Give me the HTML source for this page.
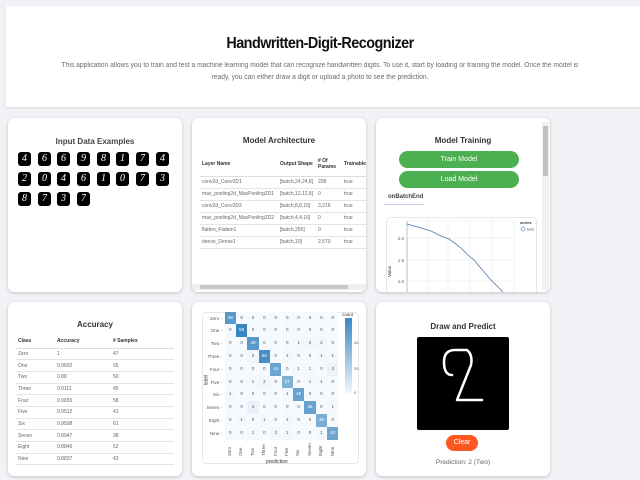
<!DOCTYPE html>
<html><head><meta charset="utf-8"><style>
*{box-sizing:border-box;margin:0;padding:0}
body{width:640px;height:480px;overflow:hidden;background:#f1f1f6;font-family:"Liberation Sans",sans-serif;position:relative}
.a{position:absolute}
.card{position:absolute;background:#fff;border-radius:6px;box-shadow:0 1px 3px rgba(0,0,0,.2);overflow:hidden}
.t{position:absolute;left:0;right:0;text-align:center;font-weight:bold;font-size:8px;color:#333}
.dg{position:absolute;width:13px;height:14px;background:#000;border-radius:3px;color:#fff;font:italic 10px "Liberation Serif",serif;text-align:center;line-height:14px}
table{border-collapse:collapse;font-size:5px;color:#666}
td,th{text-align:left;border-bottom:1px solid #e4e4e4;padding:0 2px}
th{color:#333;font-weight:bold;border-bottom:1px solid #ddd}
.btn{position:absolute;left:23px;width:120px;height:17px;border-radius:9px;background:#4caf50;color:#fff;font-size:7px;text-align:center;line-height:17px}
.c{position:absolute;width:11.4px;height:12.8px;font-size:4.5px;text-align:center;line-height:12.8px;color:#555}
.rl{position:absolute;font-size:4.5px;color:#555;text-align:right;width:22px}
</style></head><body>
<div class="a" style="left:6px;top:6px;width:634px;height:101px;background:#fff;box-shadow:0 1px 2px rgba(0,0,0,.1)"></div>
<div class="a" style="left:0;width:640px;top:35px;text-align:center;font-size:16px;font-weight:bold;color:#111;letter-spacing:-0.6px;transform:scaleX(.9)">Handwritten-Digit-Recognizer</div>
<div class="a" style="left:-40px;width:720px;top:60px;text-align:center;font-size:7px;line-height:12px;color:#6b6b6b;white-space:nowrap;transform:scaleX(.96)">This application allows you to train and test a machine learning model that can recognize handwritten digits. To use it, start by loading or training the model. Once the model is<br>ready, you can either draw a digit or upload a photo to see the prediction.</div>

<div class="card" style="left:8px;top:118px;width:174px;height:174px">
<div class="t" style="top:19px;color:#444">Input Data Examples</div>
<div class="dg" style="left:10px;top:34px">4</div><div class="dg" style="left:30px;top:34px">6</div><div class="dg" style="left:49px;top:34px">6</div><div class="dg" style="left:69px;top:34px">9</div><div class="dg" style="left:89px;top:34px">8</div><div class="dg" style="left:108px;top:34px">1</div><div class="dg" style="left:128px;top:34px">7</div><div class="dg" style="left:148px;top:34px">4</div>
<div class="dg" style="left:10px;top:54px">2</div><div class="dg" style="left:30px;top:54px">0</div><div class="dg" style="left:49px;top:54px">4</div><div class="dg" style="left:69px;top:54px">6</div><div class="dg" style="left:89px;top:54px">1</div><div class="dg" style="left:108px;top:54px">0</div><div class="dg" style="left:128px;top:54px">7</div><div class="dg" style="left:148px;top:54px">3</div>
<div class="dg" style="left:10px;top:74px">8</div><div class="dg" style="left:30px;top:74px">7</div><div class="dg" style="left:49px;top:74px">3</div><div class="dg" style="left:69px;top:74px">7</div>
</div>

<div class="card" style="left:192px;top:118px;width:174px;height:174px">
<div class="t" style="top:18px">Model Architecture</div>
<table class="a" style="left:8px;top:34px;width:170px">
<tr style="height:24px"><th style="width:78px">Layer Name</th><th style="width:38px">Output Shape</th><th style="width:26px"># Of Params</th><th>Trainable</th></tr>
<tr style="height:12px"><td>conv2d_Conv2D1</td><td>[batch,24,24,8]</td><td>208</td><td>true</td></tr>
<tr style="height:12px"><td>max_pooling2d_MaxPooling2D1</td><td>[batch,12,12,8]</td><td>0</td><td>true</td></tr>
<tr style="height:12px"><td>conv2d_Conv2D2</td><td>[batch,8,8,16]</td><td>3,216</td><td>true</td></tr>
<tr style="height:12px"><td>max_pooling2d_MaxPooling2D2</td><td>[batch,4,4,16]</td><td>0</td><td>true</td></tr>
<tr style="height:12px"><td>flatten_Flatten1</td><td>[batch,256]</td><td>0</td><td>true</td></tr>
<tr style="height:12px"><td>dense_Dense1</td><td>[batch,10]</td><td>2,570</td><td>true</td></tr>
</table>
<div class="a" style="left:0;top:166px;width:174px;height:6px;background:#f0f0f0"></div>
<div class="a" style="left:8px;top:167px;width:148px;height:4px;background:#c8c8c8"></div>
</div>

<div class="card" style="left:376px;top:118px;width:174px;height:174px">
<div class="t" style="top:18px">Model Training</div>
<div class="btn" style="top:33px">Train Model</div>
<div class="btn" style="top:53px">Load Model</div>
<div class="a" style="left:12px;top:76px;font-size:6px;font-weight:bold;color:#444">onBatchEnd</div>
<div class="a" style="left:8px;top:86px;width:40px;height:1px;background:#c5cbe8"></div>
<div class="a" style="left:166px;top:4px;width:7px;height:168px;background:#f1f1f1"></div>
<div class="a" style="left:167px;top:8px;width:5px;height:50px;background:#c1c1c1"></div>
<svg class="a" style="left:10px;top:99px" width="152" height="80">
<rect x="0.5" y="0.5" width="150" height="90" rx="4" fill="#fff" stroke="#e6e6e6"/>
<g stroke="#e8e8e8" stroke-width=".6"><line x1="21" y1="4" x2="21" y2="80"/><line x1="42" y1="4" x2="42" y2="80"/><line x1="62" y1="4" x2="62" y2="80"/><line x1="84" y1="4" x2="84" y2="80"/><line x1="106" y1="4" x2="106" y2="80"/><line x1="128" y1="4" x2="128" y2="80"/><line x1="21" y1="4" x2="128" y2="4"/><line x1="21" y1="21" x2="128" y2="21"/><line x1="21" y1="43" x2="128" y2="43"/><line x1="21" y1="64" x2="128" y2="64"/></g>
<line x1="21" y1="4" x2="21" y2="80" stroke="#999" stroke-width=".6"/>
<g font-size="4.5" fill="#555" text-anchor="end"><text x="18" y="23">2.0</text><text x="18" y="45">1.5</text><text x="18" y="66">1.0</text></g>
<text x="5" y="60" font-size="4.5" fill="#333" transform="rotate(-90 5 60)">Value</text>
<polyline fill="none" stroke="#4c78a8" stroke-width=".8" points="21,7 35,11 45,14 55,19 63,22 70,27 76,32 82,38 88,43 93,49 99,56 104,62 110,68 115,73 120,79"/>
<text x="134" y="7" font-size="4" fill="#333" font-weight="bold">series</text>
<circle cx="137" cy="12" r="2" fill="none" stroke="#4c78a8" stroke-width=".6"/><text x="141" y="13.5" font-size="4" fill="#555">loss</text>
</svg>
</div>

<div class="card" style="left:8px;top:302px;width:174px;height:174px">
<div class="t" style="top:18px;font-size:8px">Accuracy</div>
<table class="a" style="left:8px;top:32px;width:158px">
<tr style="height:14px"><th style="width:39px">Class</th><th style="width:56px">Accuracy</th><th># Samples</th></tr>
<tr style="height:11.7px"><td>Zero</td><td>1</td><td>47</td></tr>
<tr style="height:11.7px"><td>One</td><td>0.9692</td><td>65</td></tr>
<tr style="height:11.7px"><td>Two</td><td>0.88</td><td>50</td></tr>
<tr style="height:11.7px"><td>Three</td><td>0.9111</td><td>45</td></tr>
<tr style="height:11.7px"><td>Four</td><td>0.9655</td><td>58</td></tr>
<tr style="height:11.7px"><td>Five</td><td>0.9512</td><td>41</td></tr>
<tr style="height:11.7px"><td>Six</td><td>0.9508</td><td>61</td></tr>
<tr style="height:11.7px"><td>Seven</td><td>0.8947</td><td>38</td></tr>
<tr style="height:11.7px"><td>Eight</td><td>0.8846</td><td>52</td></tr>
<tr style="height:11.7px"><td>Nine</td><td>0.8837</td><td>43</td></tr>
</table>
</div>

<div class="card" style="left:192px;top:302px;width:174px;height:174px">
<div class="a" style="left:10px;top:10px;width:157px;height:152px;border:1px solid #e6e6e6;border-radius:4px"></div>
<div id="cm"></div>
<div class="a" style="left:153px;top:16px;width:7px;height:76px;background:linear-gradient(#3a87c0,#f4f8fd)"></div>
<div class="a" style="left:150px;top:10px;font-size:4.5px;color:#333">count</div>
<div class="a" style="left:162px;top:38px;font-size:4px;color:#555">40</div>
<div class="a" style="left:162px;top:64px;font-size:4px;color:#555">20</div>
<div class="a" style="left:162px;top:88px;font-size:4px;color:#555">0</div>
<div class="a" style="left:74px;top:157px;font-size:5px;color:#333">prediction</div>
<div class="a" style="left:9px;top:75px;font-size:5px;color:#333;transform:rotate(-90deg)">label</div>
</div>

<div class="card" style="left:376px;top:302px;width:174px;height:174px">
<div class="t" style="top:20px">Draw and Predict</div>
<div class="a" style="left:41px;top:35px;width:92px;height:93px;background:#000;border-radius:2px"></div>
<svg class="a" style="left:41px;top:35px" width="92" height="93"><path d="M35 38 Q27 38 27 25 Q27 13 38 13 L50 13 Q56 18 54 28 L40 63 L65 63" fill="none" stroke="#fff" stroke-width="2.5" stroke-linecap="round" stroke-linejoin="round"/></svg>
<div class="a" style="left:70px;top:133px;width:32px;height:16px;border-radius:8px;background:#ff5722;color:#fff;font-size:7px;text-align:center;line-height:16px">Clear</div>
<div class="a" style="left:0;right:0;top:157px;text-align:center;font-size:6.5px;color:#666">Prediction: 2 (Two)</div>
</div>

<script>
var M=[[49,0,0,0,0,0,0,0,0,0],[0,59,0,0,0,0,0,0,0,0],[0,0,49,0,0,0,1,2,2,0],[0,0,2,55,0,1,0,0,1,1],[0,0,0,0,44,0,1,1,0,3],[0,0,1,2,0,37,0,1,1,0],[1,0,0,0,0,1,45,0,0,0],[0,0,4,0,0,0,0,45,0,1],[0,1,0,1,0,1,0,0,39,0],[0,0,1,0,2,1,0,0,1,43]];
var N=["Zero","One","Two","Three","Four","Five","Six","Seven","Eight","Nine"];
var h="";
for(var r=0;r<10;r++){h+='<div class="rl" style="left:8px;top:'+(9.6+r*12.8+4)+'px">'+N[r]+' -</div>';
for(var c=0;c<10;c++){var v=M[r][c],t=v/59;var R=Math.round(246-(246-58)*t),G=Math.round(250-(250-135)*t),B=Math.round(254-(254-192)*t);
h+='<div class="c" style="left:'+(32.5+c*11.4)+'px;top:'+(9.6+r*12.8)+'px;background:rgb('+R+','+G+','+B+');'+(v>30?'color:#fff':'')+'">'+v+'</div>';}}
for(var c=0;c<10;c++)h+='<div class="a" style="font-size:4.5px;color:#555;left:'+(35+c*11.4)+'px;top:154px;transform:rotate(-90deg);transform-origin:left top;white-space:nowrap">'+N[c]+'</div>';
document.getElementById("cm").innerHTML=h;
</script>
</body></html>
